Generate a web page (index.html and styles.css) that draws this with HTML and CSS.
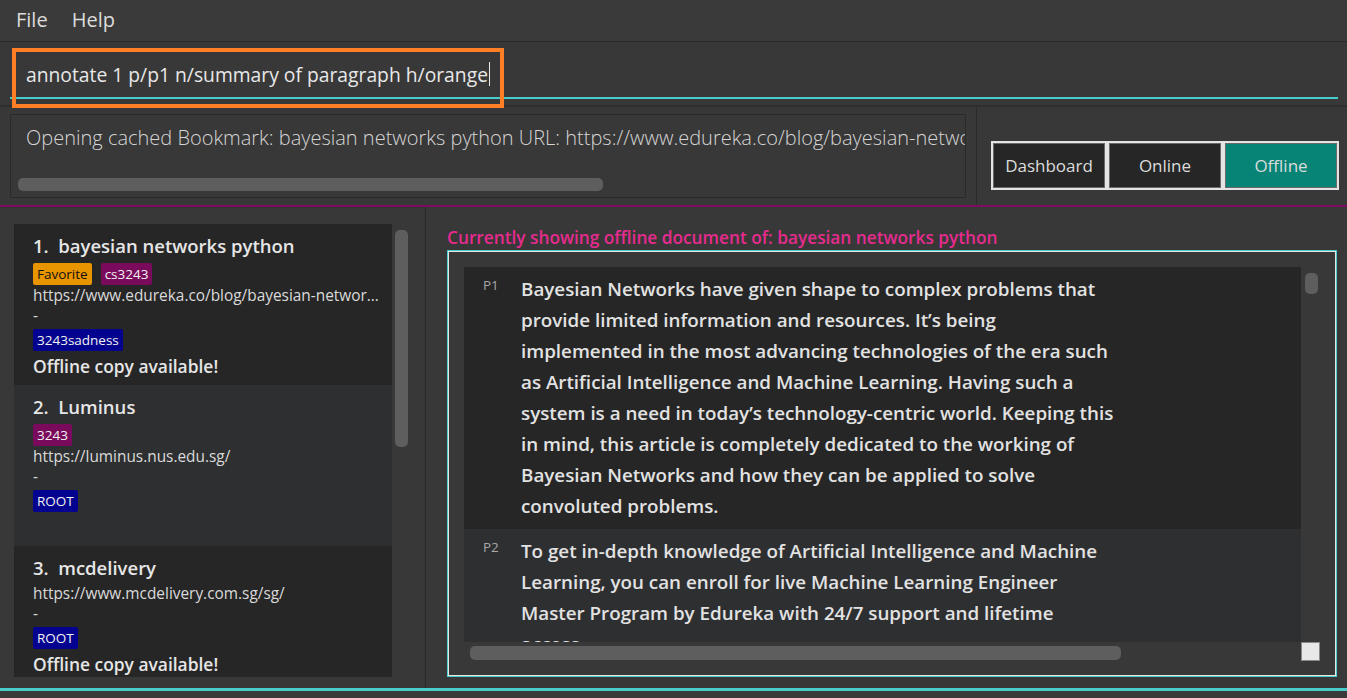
FILE: index.html
```html
<!DOCTYPE html>
<html>
<head>
<meta charset="utf-8">
<link rel="stylesheet" href="styles.css">
</head>
<body>
<div class="app">
  <div class="menubar">
    <span class="menu-item">File</span>
    <span class="menu-item">Help</span>
  </div>
  <div class="command">
    <div class="command-field">
      <span class="command-text">annotate 1 p/p1 n/summary of paragraph h/orange</span><span class="caret"></span>
    </div>
    <div class="highlight"></div>
  </div>
  <div class="result-row">
    <div class="result-box">
      <div class="result-text">Opening cached Bookmark: bayesian networks python URL: https://www.edureka.co/blog/bayesian-networks-python/</div>
      <div class="hbar"><div class="hthumb result-thumb"></div></div>
    </div>
    <div class="mode-pane">
      <div class="mode-group">
        <div class="mode-btn">Dashboard</div>
        <div class="mode-btn">Online</div>
        <div class="mode-btn active">Offline</div>
      </div>
    </div>
  </div>
  <div class="main">
    <div class="left">
      <div class="list">
        <div class="cards">
          <div class="card dark">
            <div class="card-title">1.&nbsp; bayesian networks python</div>
            <div class="tags"><span class="tag fav">Favorite</span><span class="tag purple">cs3243</span></div>
            <div class="card-line">https://www.edureka.co/blog/bayesian-networ...</div>
            <div class="card-line">-</div>
            <div class="tags gap"><span class="tag blue">3243sadness</span></div>
            <div class="card-offline">Offline copy available!</div>
          </div>
          <div class="card light">
            <div class="card-title">2.&nbsp; Luminus</div>
            <div class="tags"><span class="tag purple">3243</span></div>
            <div class="card-line">https://luminus.nus.edu.sg/</div>
            <div class="card-line">-</div>
            <div class="tags gap"><span class="tag blue">ROOT</span></div>
          </div>
          <div class="card dark">
            <div class="card-title">3.&nbsp; mcdelivery</div>
            <div class="card-line">https://www.mcdelivery.com.sg/sg/</div>
            <div class="card-line">-</div>
            <div class="tags gap"><span class="tag blue">ROOT</span></div>
            <div class="card-offline">Offline copy available!</div>
          </div>
        </div>
        <div class="vbar list-vbar"><div class="vthumb list-thumb"></div></div>
      </div>
    </div>
    <div class="right">
      <div class="doc-title">Currently showing offline document of: bayesian networks python</div>
      <div class="doc-box">
        <div class="doc-scroll">
          <div class="doc-content">
            <div class="para dark">
              <div class="para-label">P1</div>
              <div class="para-text">Bayesian Networks have given shape to complex problems that<br>provide limited information and resources. It’s being<br>implemented in the most advancing technologies of the era such<br>as Artificial Intelligence and Machine Learning. Having such a<br>system is a need in today’s technology-centric world. Keeping this<br>in mind, this article is completely dedicated to the working of<br>Bayesian Networks and how they can be applied to solve<br>convoluted problems.</div>
            </div>
            <div class="para light">
              <div class="para-label">P2</div>
              <div class="para-text">To get in-depth knowledge of Artificial Intelligence and Machine<br>Learning, you can enroll for live Machine Learning Engineer<br>Master Program by Edureka with 24/7 support and lifetime<br>access.</div>
            </div>
          </div>
          <div class="vbar doc-vbar"><div class="vthumb doc-vthumb"></div></div>
          <div class="hbar doc-hbar"><div class="hthumb doc-hthumb"></div></div>
          <div class="corner"></div>
        </div>
      </div>
    </div>
  </div>
  <div class="footer"></div>
</div>
</body>
</html>
```
FILE: styles.css
```css
* { box-sizing: border-box; }
html, body { margin: 0; padding: 0; }
body {
  background: #383838;
  font-family: "Open Sans", "Noto Sans", sans-serif;
  color: #e0e0e0;
  width: 1347px;
  height: 698px;
  overflow: hidden;
}
.app { display: flex; flex-direction: column; height: 698px; }

.menubar {
  height: 42px;
  display: flex;
  align-items: center;
  gap: 24px;
  padding-left: 16px;
  padding-bottom: 3px;
  border-bottom: 1px solid #2a2a2a;
  background: #3a3a3a;
}
.menu-item { font-size: 20px; color: #dcdcdc; }

.command {
  position: relative;
  height: 65px;
  padding: 10px 9px 0 10px;
  border-bottom: 2px solid #2e2e2e;
}
.command-field {
  height: 47px;
  border-bottom: 2px solid #48cccc;
  display: flex;
  align-items: center;
  padding-left: 16px;
  padding-bottom: 1px;
}
.command-text { font-size: 19.3px; color: #e8e8e8; white-space: nowrap; }
.caret { display: inline-block; width: 1px; height: 24px; background: #e8e8e8; margin-left: 1px; }
.highlight {
  position: absolute;
  left: 12px;
  top: 6px;
  width: 492px;
  height: 60px;
  border: 4px solid #ff7f27;
}

.result-row {
  height: 100px;
  display: flex;
  border-bottom: 2px solid #7e0a62;
}
.result-box {
  margin: 7px 0 0 10px;
  width: 956px;
  height: 84px;
  border: 1px solid #2a2a2a;
  background: #383838;
  padding: 0 0 0 7px;
  display: flex;
  flex-direction: column;
  overflow: hidden;
}
.result-text {
  font-size: 20px;
  font-weight: 300;
  color: #d6d6d6;
  white-space: nowrap;
  padding: 9px 0 0 8px;
  height: 63px;
}
.hbar { height: 14px; }
.hthumb { height: 13px; background: #5e5e5e; border-radius: 5px; }
.result-thumb { width: 585px; }
.mode-pane {
  margin-left: 10px;
  border-left: 1px solid #2a2a2a;
  flex: 1;
  padding: 34px 0 0 14px;
}
.mode-group {
  display: inline-flex;
  gap: 4px;
  padding: 2px;
  background: #e4e4e4;
}
.mode-btn {
  width: 112px;
  height: 45px;
  background: #262626;
  border: 1px solid #6a6a6a;
  color: #dcdcdc;
  font-size: 17px;
  display: flex;
  align-items: center;
  justify-content: center;
}
.mode-btn.active { background: #078476; }

.main { flex: 1; display: flex; min-height: 0; border-bottom: 3px solid #48cccc; }
.left {
  width: 426px;
  border-right: 1px solid #2a2a2a;
  border-top: 1px solid #333;
  padding: 16px 0 0 14px;
}
.list { display: flex; height: 453px; overflow: hidden; }
.cards { width: 378px; overflow: hidden; }
.card { height: 161px; padding: 10px 0 0 19px; overflow: hidden; }
.card.dark { background: #262626; }
.card.light { background: #2e2f31; }
.card-title { font-size: 18.5px; font-weight: 600; height: 28px; line-height: 24px; color: #e6e6e6; white-space: pre; }
.tags { display: flex; gap: 9px; height: 24px; padding-top: 1px; }
.tags.gap { padding-top: 3px; height: 26px; }
.tag {
  height: 22px;
  line-height: 22px;
  padding: 0 4px;
  font-size: 13.5px;
  border-radius: 2px;
  color: #f2f2f2;
}
.tag.fav { background: #e99500; color: #111; }
.tag.purple { background: #7a0a5c; }
.tag.blue { background: #03038f; }
.card-line { font-size: 15.4px; line-height: 20px; height: 20px; color: #dadada; white-space: nowrap; }
.card-offline { font-size: 17.4px; font-weight: 600; line-height: 28px; color: #e6e6e6; }
.vbar { width: 18px; display: flex; justify-content: center; }
.list-vbar { padding-top: 6px; }
.vthumb { width: 13px; background: #5e5e5e; border-radius: 5px; }
.list-thumb { height: 217px; }

.right { flex: 1; padding: 19px 10px 11px 21px; display: flex; flex-direction: column; }
.doc-title { font-size: 17.25px; font-weight: 600; color: #e52b8e; line-height: 24px; height: 24px; white-space: nowrap; }
.doc-box {
  flex: 1;
  border: 1px solid #48cccc;
  box-shadow: inset 0 0 0 1px #e6e6e6;
  padding: 16px 16px 15px 16px;
  min-height: 0;
}
.doc-scroll {
  height: 100%;
  display: grid;
  grid-template-columns: 1fr 19px;
  grid-template-rows: 1fr 19px;
}
.doc-content { overflow: hidden; min-height: 0; }
.para { display: flex; padding: 7px 0 7px 19px; }
.para.dark { background: #262626; }
.para.light { background: #2e2f31; }
.para-label { width: 38px; font-size: 13.5px; color: #a8a8a8; padding-top: 2px; }
.para-text { font-size: 18.8px; font-weight: 600; line-height: 31px; color: #e2e2e2; white-space: nowrap; }
.doc-vbar { padding-top: 6px; justify-content: flex-start; padding-left: 4px; }
.doc-vthumb { height: 21px; }
.doc-hbar { padding: 4px 0 0 6px; height: 19px; }
.doc-hthumb { width: 651px; height: 14px; }
.corner { background: #e8e8e8; border: 1px solid #8a8a8a; }

.footer { height: 7px; background: #3a3a3a; }
```
